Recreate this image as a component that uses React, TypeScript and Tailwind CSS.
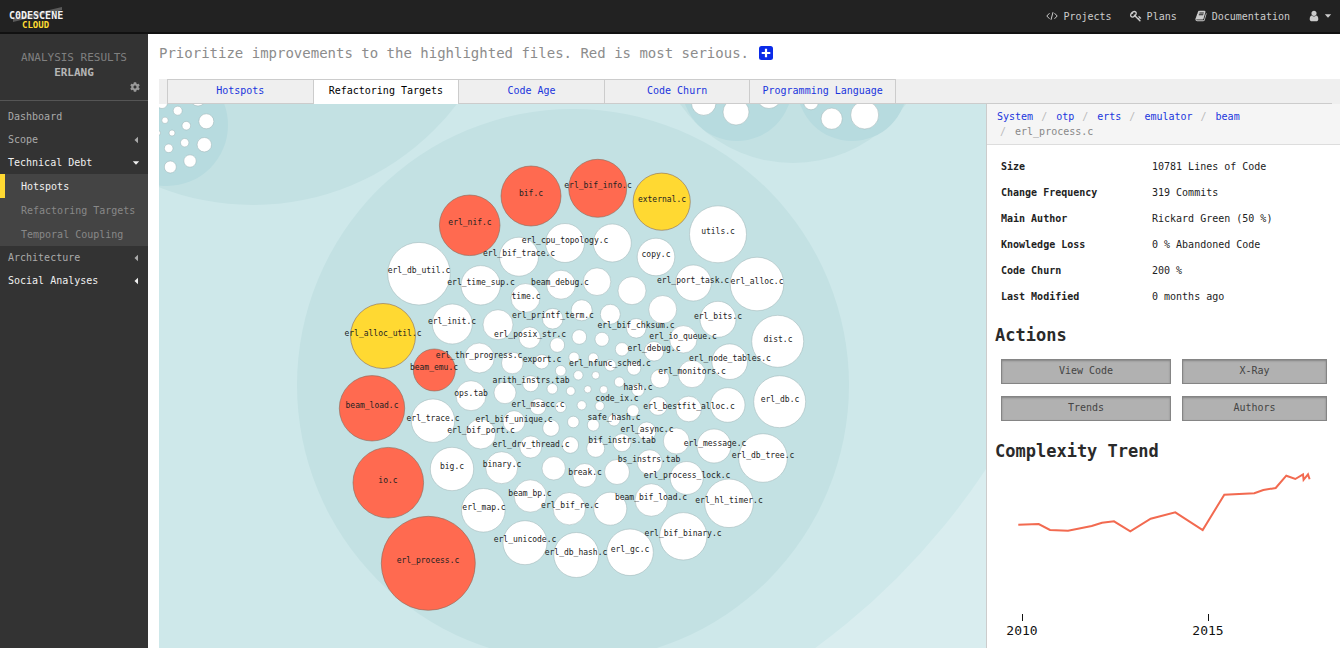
import React from "react";
import { FaCog } from "react-icons/fa";

type Circle = [number, number, number];
type Label = [string, number, number];

const RED = "#ff6a50";
const YELLOW = "#ffd932";

const highlighted: { at: Circle; fill: string }[] = [
  { at: [469.7, 225.3, 30.3], fill: RED },
  { at: [531, 196, 30], fill: RED },
  { at: [597.7, 188.3, 29], fill: RED },
  { at: [434.3, 370, 21], fill: RED },
  { at: [372, 408.3, 32.7], fill: RED },
  { at: [388.3, 482.7, 35.3], fill: RED },
  { at: [428.3, 563.3, 47], fill: RED },
  { at: [661.7, 201.7, 28.6], fill: YELLOW },
  { at: [383, 336, 32.5], fill: YELLOW },
];

const files: Circle[] = [
  [419, 273.7, 31.3], [480.7, 285.3, 19.7], [519, 256.7, 19.5], [452.3, 324, 20],
  [498, 324.7, 15], [525.5, 298, 14.5], [565, 243, 19.5], [612.3, 243, 19],
  [656, 257, 18.8], [561, 284.7, 14.5], [597, 281.7, 13.8], [632, 290.7, 14],
  [662.7, 309.5, 14], [718, 234.3, 28.5], [757, 284, 26.8], [693.3, 283, 18],
  [718, 319.3, 18], [683.3, 339.3, 13.7], [777.7, 341.3, 26], [729.7, 361.7, 17.8],
  [692, 374, 13.7], [479.3, 358, 15], [471, 395.7, 15], [505, 392.7, 11],
  [512.3, 363, 10.8], [433, 420.7, 21.7], [480.7, 434, 15], [514, 421.7, 11],
  [530.7, 447, 11], [452, 469, 21.7], [501.7, 467.7, 16], [483.3, 510.3, 21.8],
  [530.3, 496, 16.2], [525, 542.7, 22], [576.3, 555, 22.5], [630, 552.3, 23.3],
  [569.3, 508.7, 16.2], [610.3, 508.7, 16.5], [651.3, 500, 16.3], [553.7, 468.3, 11.7],
  [584.7, 475.3, 11.8], [617, 472, 12.5], [649.7, 462.3, 12.5], [595.7, 448.3, 9],
  [622, 442.7, 9], [570.3, 445, 8.3], [551, 428, 8.3], [552.7, 318.7, 10.3],
  [581.7, 310.3, 10.5], [610.3, 314.3, 10], [636.3, 328.3, 9.8], [529.7, 337.7, 10.7],
  [557.3, 345, 7.3], [579.3, 337, 7.3], [602, 339.3, 7], [622, 349.3, 6.7],
  [654, 351.3, 9.8], [541.7, 361.7, 7.2], [574, 357.3, 5.2], [593.3, 358, 5],
  [610.3, 365.3, 5.7], [634, 368.3, 6.8], [560.7, 370.7, 5.3], [578.3, 375.3, 4.7],
  [595.7, 375.3, 3.8], [619.3, 382, 5], [660, 378.7, 9.3], [530.7, 383.7, 8],
  [552.3, 388.7, 5.3], [570.7, 391, 4.4], [587.7, 389.3, 3.6], [603.7, 389.7, 4],
  [638, 390, 6.3], [581.7, 405.3, 4.6], [599.7, 406, 4.6], [538, 406.7, 8],
  [560.7, 407, 5.5], [573.3, 422, 5.8], [593.3, 425, 6], [614, 420, 6],
  [633, 410.7, 6], [658, 406, 9.3], [646.7, 431.3, 9.3], [688.7, 409, 12.8],
  [727.7, 405, 17.3], [779.7, 401.7, 26], [676.3, 441, 13], [714, 446, 17],
  [763, 458, 24.3], [686.7, 478, 16.5], [729, 503.3, 24.3], [683.3, 536.3, 23.7],
  [206.3, 121.3, 7.5], [204.3, 144.7, 7.2], [190, 161, 6.2], [170.3, 167, 6],
  [168.7, 148.3, 4.3], [184.7, 142.7, 4.2], [172, 133, 3], [186.3, 125.7, 4.3],
  [177.7, 110.7, 4.5], [165, 120.3, 3.2], [162, 103, 5.5], [198, 98, 8],
  [158, 133, 2.5], [703.7, 103, 12.3], [736, 112, 13], [769, 96, 12.5],
  [811, 102.5, 7.3], [831.7, 118.7, 10.6], [864.7, 115, 14],
];

const labels: Label[] = [
  ["bif.c", 531, 196], ["erl_bif_info.c", 598, 188], ["external.c", 662, 202],
  ["utils.c", 718, 234], ["erl_nif.c", 470, 225], ["erl_cpu_topology.c", 565, 243],
  ["erl_bif_trace.c", 519, 256], ["copy.c", 656, 257], ["erl_db_util.c", 419, 273],
  ["erl_time_sup.c", 481, 285], ["beam_debug.c", 560, 285], ["erl_port_task.c", 693, 283],
  ["erl_alloc.c", 757, 284], ["time.c", 526, 299], ["erl_bits.c", 718, 319],
  ["erl_printf_term.c", 553, 318], ["erl_bif_chksum.c", 636, 328], ["erl_init.c", 452, 324],
  ["erl_posix_str.c", 530, 337], ["erl_io_queue.c", 683, 339], ["dist.c", 778, 342],
  ["erl_alloc_util.c", 383, 336], ["erl_debug.c", 654, 351], ["erl_thr_progress.c", 479, 358],
  ["export.c", 542, 362], ["erl_node_tables.c", 730, 361], ["beam_emu.c", 434, 370],
  ["erl_nfunc_sched.c", 610, 366], ["erl_monitors.c", 692, 374], ["arith_instrs.tab", 531, 383],
  ["hash.c", 638, 390], ["ops.tab", 471, 396], ["code_ix.c", 617, 401],
  ["erl_db.c", 780, 402], ["beam_load.c", 372, 408], ["erl_msacc.c", 538, 407],
  ["erl_bestfit_alloc.c", 689, 409], ["erl_trace.c", 433, 421], ["erl_bif_unique.c", 514, 422],
  ["safe_hash.c", 614, 420], ["erl_bif_port.c", 481, 433], ["erl_async.c", 647, 432],
  ["bif_instrs.tab", 622, 443], ["erl_drv_thread.c", 531, 447], ["erl_message.c", 715, 446],
  ["erl_db_tree.c", 763, 458], ["big.c", 452, 469], ["binary.c", 502, 467],
  ["bs_instrs.tab", 649, 462], ["break.c", 585, 475], ["erl_process_lock.c", 687, 478],
  ["io.c", 388, 483], ["beam_bp.c", 530, 496], ["erl_hl_timer.c", 729, 503],
  ["beam_bif_load.c", 651, 500], ["erl_bif_re.c", 570, 508], ["erl_map.c", 484, 510],
  ["erl_bif_binary.c", 683, 536], ["erl_unicode.c", 525, 542], ["erl_gc.c", 630, 552],
  ["erl_db_hash.c", 576, 555], ["erl_process.c", 428, 563],
];

const details: [string, string][] = [
  ["Size", "10781 Lines of Code"],
  ["Change Frequency", "319 Commits"],
  ["Main Author", "Rickard Green (50 %)"],
  ["Knowledge Loss", "0 % Abandoned Code"],
  ["Code Churn", "200 %"],
  ["Last Modified", "0 months ago"],
];

const KEY =
  "M832 512q0-80-56-136t-136-56-136 56-56 136q0 42 19 83-41-19-83-19-80 0-136 56t-56 136 56 136 136 56 136-56 56-136q0-42-19-83 41 19 83 19 80 0 136-56t56-136zm851 704q0 17-49 66t-66 49q-9 0-28.5-16t-36.5-33-38.5-40-24.5-26l-96 96 220 220q28 28 28 68 0 42-39 81t-81 39q-40 0-68-28l-671-671q-176 131-365 131-163 0-265.5-102.5t-102.5-265.5q0-160 95-313t248-248 313-95q163 0 265.5 102.5t102.5 265.5q0 189-131 365l355 355 96-96q-3-3-26-24.5t-40-38.5-33-36.5-16-28.5q0-17 49-66t66-49q13 0 23 10 6 6 46 44.5t82 79.5 86.5 86 73 78 28.5 41z";
const BOOK =
  "M1703 478q40 57 18 129l-275 906q-19 64-76.5 107.5t-122.5 43.5h-923q-77 0-148.5-53.5t-99.5-131.5q-24-67-2-127 0-4 3-27t4-37q1-8-3-21.5t-3-19.5q2-11 8-21t16.5-23.5 16.5-23.5q23-38 45-91.5t30-91.5q3-10 .5-30t-.5-28q3-11 17-28t17-23q21-36 42-92t25-90q1-9-2.5-32t.5-28q4-13 22-30.5t22-22.5q19-26 42.5-84.5t27.5-96.5q1-8-3-25.5t-2-26.5q2-8 9-18t18-23 17-21q8-12 16.5-30.5t15-35 16-36 19.5-32 26.5-23.5 36-11.5 47.5 5.5l-1 3q38-9 51-9h761q74 0 114 56t18 130l-274 906q-36 119-71.5 153.5t-128.5 34.5h-869q-27 0-38 15-11 16-1 43 24 70 144 70h923q29 0 56-15.5t35-41.5l300-987q7-22 5-57 38 15 59 43zm-1064 2q-4 13 2 22.5t20 9.5h608q13 0 25.5-9.5t16.5-22.5l21-64q4-13-2-22.5t-20-9.5h-608q-13 0-25.5 9.5t-16.5 22.5zm-83 256q-4 13 2 22.5t20 9.5h608q13 0 25.5-9.5t16.5-22.5l21-64q4-13-2-22.5t-20-9.5h-608q-13 0-25.5 9.5t-16.5 22.5z";
const USER =
  "M1536 1399q0 109-62.5 187t-150.5 78h-854q-88 0-150.5-78t-62.5-187q0-85 8.5-160.5t31.5-152 58.5-131 94-89 134.5-34.5q131 128 313 128t313-128q76 0 134.5 34.5t94 89 58.5 131 31.5 152 8.5 160.5zm-256-887q0 159-112.5 271.5t-271.5 112.5-271.5-112.5-112.5-271.5 112.5-271.5 271.5-112.5 271.5 112.5 112.5 271.5z";

function Glyph({ d }: { d: string }) {
  return (
    <svg viewBox="0 0 1792 1792" className="size-3" fill="currentColor" aria-hidden="true">
      <path d={d} />
    </svg>
  );
}

function Caret({ left }: { left?: boolean }) {
  return (
    <svg viewBox="0 0 8 8" className="size-2" fill="currentColor" aria-hidden="true">
      <path d={left ? "M6 .8v6.4L2.5 4z" : "M.8 2.3h6.4L4 5.8z"} />
    </svg>
  );
}

function Logo() {
  return (
    <a href="#home" aria-label="CodeScene Cloud">
      <svg width="60" height="26" viewBox="0 0 60 26" aria-hidden="true">
        <path d="M5 15.5 54 4v3L5 19z" fill="#5a5a5a" />
        <text x="1" y="15.5" className="text-[10px] font-bold" fill="#f2f2f2">C0DESCENE</text>
        <text x="14" y="25" className="text-[9px] font-bold" fill="#ffdc32">CLOUD</text>
      </svg>
    </a>
  );
}

function TopBar() {
  return (
    <header className="flex h-[34px] items-center justify-between border-b-2 border-[#111] bg-[#222] pr-2 pl-2 text-[#ccc]">
      <Logo />
      <nav className="flex items-center gap-[18px]">
        <a href="#projects" className="flex items-center gap-[5px]">
          <svg viewBox="0 0 12 12" className="size-3" fill="none" stroke="currentColor" aria-hidden="true">
            <path d="M3.5 3.2.8 6l2.7 2.8M8.5 3.2 11.2 6 8.5 8.8M7 2.2 5 9.8" />
          </svg>
          Projects
        </a>
        <a href="#plans" className="flex items-center gap-[5px]"><Glyph d={KEY} />Plans</a>
        <a href="#documentation" className="flex items-center gap-[5px]"><Glyph d={BOOK} />Documentation</a>
        <button type="button" aria-label="Account" className="flex items-center gap-1"><Glyph d={USER} /><Caret /></button>
      </nav>
    </header>
  );
}

function MenuLink({ text, tone, arrow }: { text: string; tone: string; arrow?: "left" | "down" }) {
  return (
    <a href="#menu" className={"flex h-[23px] items-center justify-between pr-2 pl-2 " + tone}>
      {text}
      {arrow && <Caret left={arrow === "left"} />}
    </a>
  );
}

function Sidebar() {
  return (
    <aside className="w-[148px] shrink-0 bg-[#333] text-[#aaa]">
      <div className="border-b border-[#555] pt-4 pr-2 pb-2 pl-2 text-[11px] leading-[15px]">
        <p className="text-center text-[#808080]">ANALYSIS RESULTS</p>
        <p className="text-center font-bold text-[#b5b5b5]">ERLANG</p>
        <div className="flex justify-end pt-[2px]">
          <button type="button" aria-label="Settings" className="text-[#999]"><FaCog className="size-[10px]" /></button>
        </div>
      </div>
      <nav className="pt-1">
        <MenuLink text="Dashboard" tone="text-[#aaa]" />
        <MenuLink text="Scope" tone="text-[#aaa]" arrow="left" />
        <MenuLink text="Technical Debt" tone="text-[#f0f0f0]" arrow="down" />
        <div className="bg-[#444]">
          <a href="#hotspots" className="flex h-6 items-center border-l-5 border-[#ffd932] pl-4 text-[#f0f0f0]">Hotspots</a>
          <a href="#targets" className="flex h-6 items-center border-l-5 border-transparent pl-4 text-[#888]">Refactoring Targets</a>
          <a href="#coupling" className="flex h-6 items-center border-l-5 border-transparent pl-4 text-[#888]">Temporal Coupling</a>
        </div>
        <MenuLink text="Architecture" tone="text-[#aaa]" arrow="left" />
        <MenuLink text="Social Analyses" tone="text-[#f0f0f0]" arrow="left" />
      </nav>
    </aside>
  );
}

function Tabs() {
  const names = ["Hotspots", "Refactoring Targets", "Code Age", "Code Churn", "Programming Language"];
  return (
    <div className="bg-[#efefef] px-2">
      <div role="tablist" className="flex h-[25px] border-b border-[#ccc]">
        <div className="-mb-px grid w-[729px] grid-cols-5 border-l border-[#ccc]">
          {names.map((name, i) => (
            <button
              key={name}
              type="button"
              role="tab"
              aria-selected={i === 1}
              className={
                i === 1
                  ? "border-t border-r border-[#ccc] bg-white pb-1 text-black"
                  : "border-t border-r border-b border-[#ccc] pb-[3px] text-[#1a35dd]"
              }
            >
              {name}
            </button>
          ))}
        </div>
      </div>
    </div>
  );
}

function BubbleMap() {
  return (
    <svg
      viewBox="159 104 827 544"
      preserveAspectRatio="xMidYMid slice"
      className="block min-w-0 flex-1 bg-[#d9edef]"
      role="img"
      aria-label="Files by size and priority"
    >
      <circle cx="402" cy="83" r="700" fill="#cee8ea" />
      <g fill="#c3e1e3">
        <circle cx="253" cy="-51.5" r="256.5" />
        <circle cx="793" cy="25.3" r="137.7" />
        <circle cx="573" cy="385" r="276" />
      </g>
      <g fill="#b7dbdf">
        <circle cx="167" cy="125" r="61" />
        <circle cx="737" cy="86" r="55" />
        <circle cx="852" cy="86" r="55" />
      </g>
      <g fill="#fff" stroke="#9bb0b2" strokeWidth="0.5">
        {files.map(([x, y, r], i) => <circle key={i} cx={x} cy={y} r={r} />)}
      </g>
      <g stroke="#8a6a5a" strokeWidth="0.6">
        {highlighted.map(({ at: [x, y, r], fill }, i) => <circle key={i} cx={x} cy={y} r={r} fill={fill} />)}
      </g>
      <g textAnchor="middle" fill="#222" className="text-[8px]">
        {labels.map(([name, x, y]) => <text key={name} x={x} y={y}>{name}</text>)}
      </g>
    </svg>
  );
}

function Breadcrumbs() {
  return (
    <nav aria-label="Path" className="border-b border-[#ddd] bg-[#f5f5f5] pt-[5px] pr-2 pb-[5px] pl-[10px]">
      <ol className="flex flex-wrap gap-x-[5px] leading-[15px]">
        {["System", "otp", "erts", "emulator", "beam"].map((part, i) => (
          <li key={part}>
            {i > 0 && <span className="mr-[9px] ml-[3px] text-[#bbb]">/</span>}
            <a href="#path" className="text-[#1a35dd]">{part}</a>
          </li>
        ))}
        <li className="text-[#888]"><span className="mr-[9px] ml-[3px] text-[#bbb]">/</span>erl_process.c</li>
      </ol>
    </nav>
  );
}

function Trend() {
  return (
    <svg width="345" height="180" viewBox="0 0 345 180" className="block" role="img" aria-label="Complexity trend from 2010">
      <polyline
        fill="none"
        stroke="#f26a50"
        strokeWidth="2"
        points="23.3,56.7 43.7,56 55,62 73,62.7 96.7,58 107,54.7 119,53.3 135.3,63.3 155.7,50.7 180.3,44.3 207.7,62 229.3,26.7 259.3,25.3 268.3,22 280.7,20 291.3,7.7 300.3,11 308,6.3 308.6,11.8 313,6.3 314.6,11.3"
      />
      <path d="M27.5 146v7M213.5 146v7" stroke="#111" />
      <g textAnchor="middle" fill="#111" className="text-[13px]">
        <text x="27" y="167">2010</text>
        <text x="213" y="167">2015</text>
      </g>
    </svg>
  );
}

function DetailPanel() {
  return (
    <section className="w-[354px] shrink-0 border-l border-[#ccc] bg-white text-[#222]">
      <Breadcrumbs />
      <div className="pt-2 pl-2">
        <table className="ml-[6px] text-left">
          <tbody>
            {details.map(([name, value]) => (
              <tr key={name} className="h-[26px]">
                <th scope="row" className="w-[151px] font-bold">{name}</th>
                <td>{value}</td>
              </tr>
            ))}
          </tbody>
        </table>
        <h2 className="pt-[14px] text-[17px] leading-6 font-bold text-[#2a2a2a]">Actions</h2>
        <div className="mt-3 mr-[13px] ml-[6px] grid grid-cols-[170fr_145fr] gap-x-[11px] gap-y-3">
          {["View Code", "X-Ray", "Trends", "Authors"].map((name) => (
            <button
              key={name}
              type="button"
              className="h-[25px] border border-[#858585] bg-[#b1b1b1] pb-[2px] text-[#444] shadow-[inset_0_1px_2px_rgba(0,0,0,0.25)]"
            >
              {name}
            </button>
          ))}
        </div>
        <h2 className="pt-[18px] pb-[5px] text-[17px] leading-6 font-bold text-[#2a2a2a]">Complexity Trend</h2>
        <Trend />
      </div>
    </section>
  );
}

export default function App() {
  return (
    <div className="flex min-h-screen flex-col bg-white font-['DejaVu_Sans_Mono','Liberation_Mono',monospace] text-[10px] leading-[15px]">
      <TopBar />
      <div className="flex flex-1">
        <Sidebar />
        <main className="flex min-w-0 flex-1 flex-col">
          <div className="flex h-[45px] items-center gap-[10px] pb-[7px] pl-[11px]">
            <h1 className="text-[14px] text-[#8c8c8c]">
              Prioritize improvements to the highlighted files. Red is most serious.
            </h1>
            <button type="button" aria-label="More information">
              <svg width="14" height="14" viewBox="0 0 14 14" className="block" aria-hidden="true">
                <rect width="14" height="14" rx="2.5" fill="#0a2be8" />
                <path d="M7 2.7v8.6M2.7 7h8.6" stroke="#fff" strokeWidth="2.2" />
              </svg>
            </button>
          </div>
          <div className="flex flex-1 flex-col pl-[11px]">
            <Tabs />
            <div className="flex flex-1">
              <BubbleMap />
              <DetailPanel />
            </div>
          </div>
        </main>
      </div>
    </div>
  );
}
